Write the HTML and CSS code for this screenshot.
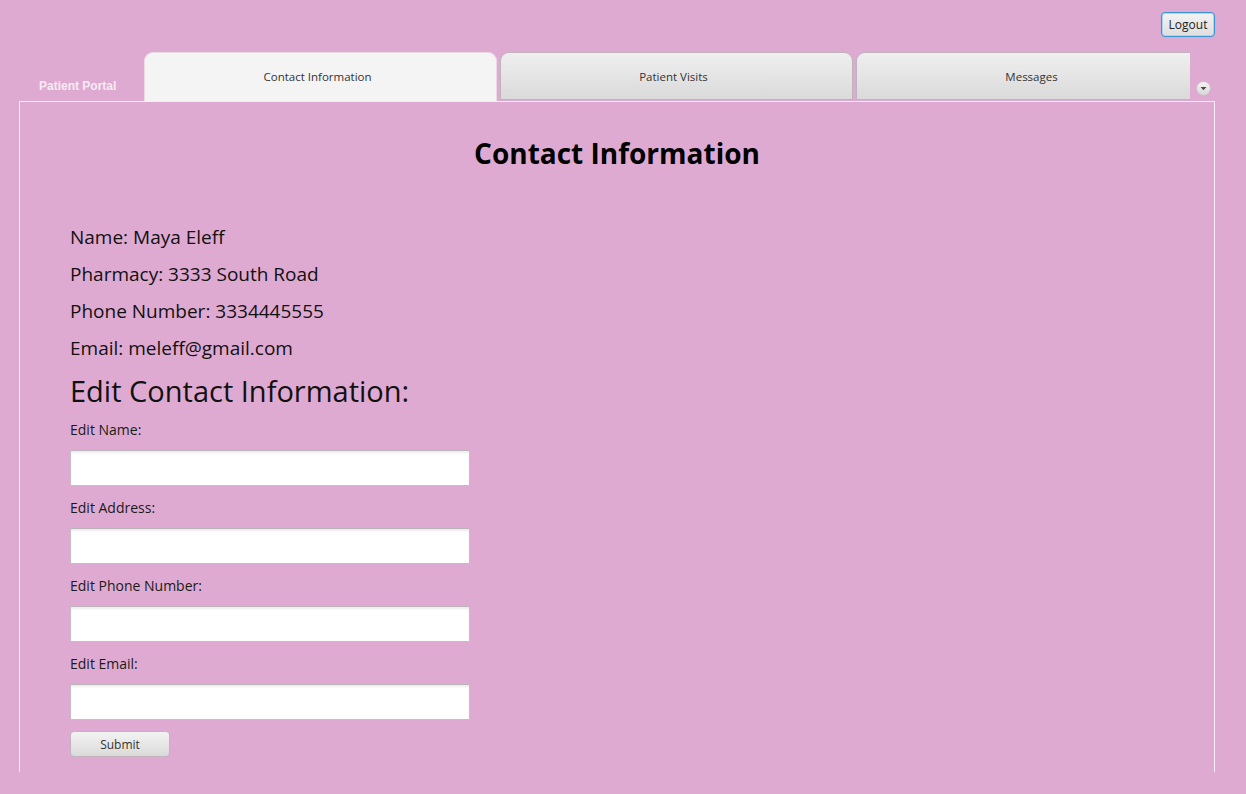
FILE: index.html
```html
<!DOCTYPE html>
<html lang="en">
<head>
<meta charset="utf-8">
<title>Patient Portal</title>
<link rel="stylesheet" href="styles.css">
</head>
<body>
<div class="app">
  <div class="topbar">
    <button class="logout">Logout</button>
  </div>
  <div class="tabrow">
    <div class="portal">Patient Portal</div>
    <div class="tabs">
      <div class="tab active">Contact Information</div>
      <div class="tab">Patient Visits</div>
      <div class="tab last">Messages</div>
    </div>
    <div class="overflow">
      <svg width="15" height="15" viewBox="0 0 15 15"><defs><linearGradient id="g" x1="0" y1="0" x2="0" y2="1"><stop offset="0" stop-color="#f6f6f6"/><stop offset="1" stop-color="#d6d6d6"/></linearGradient></defs><circle cx="7.5" cy="7.5" r="7" fill="url(#g)" stroke="#c9b8c4" stroke-width="0.8"/><path d="M4.6 6 L10.4 6 L7.5 9.2 Z" fill="#4a4a4a"/></svg>
    </div>
  </div>
  <div class="pane">
    <h1 class="title">Contact Information</h1>
    <div class="info">
      <p>Name: Maya Eleff</p>
      <p>Pharmacy: 3333 South Road</p>
      <p>Phone Number: 3334445555</p>
      <p>Email: meleff@gmail.com</p>
    </div>
    <h2 class="edit-title">Edit Contact Information:</h2>
    <form class="form">
      <label class="lbl">Edit Name:</label>
      <input class="field" type="text">
      <label class="lbl">Edit Address:</label>
      <input class="field" type="text">
      <label class="lbl">Edit Phone Number:</label>
      <input class="field" type="text">
      <label class="lbl">Edit Email:</label>
      <input class="field" type="text">
      <button type="button" class="submit">Submit</button>
    </form>
  </div>
</div>
</body>
</html>
```
FILE: styles.css
```css
* { box-sizing: border-box; }
html, body { margin: 0; padding: 0; }
body {
  background: #dfaad2;
  font-family: "Open Sans", "Noto Sans", sans-serif;
  color: #111;
  width: 1246px;
  height: 794px;
  overflow: hidden;
}
.app { display: flex; flex-direction: column; height: 794px; }
.topbar {
  display: flex;
  justify-content: flex-end;
  padding: 12px 31px 0 0;
  height: 52px;
}
.logout {
  width: 54px;
  height: 25px;
  padding: 0;
  font-family: "Open Sans", sans-serif;
  font-size: 12px;
  color: #222;
  background: linear-gradient(#f3f3f3, #dedede);
  border: 1px solid #3b97d3;
  border-radius: 4px;
  box-shadow: inset 0 0 0 1px #a9d6f0, 0 0 1px #6fb6e3;
}
.tabrow {
  display: flex;
  align-items: flex-end;
  height: 49px;
}
.portal {
  width: 144px;
  padding-left: 39px;
  padding-bottom: 8px;
  font-family: "Liberation Sans", Arial, sans-serif;
  font-weight: bold;
  font-size: 12px;
  color: #f6eaf2;
}
.tabs { display: flex; gap: 3px; height: 49px; }
.tab {
  width: 353px;
  height: 48px;
  display: flex;
  justify-content: center;
  padding: 16px 6px 0 0;
  font-size: 11.5px;
  color: #333;
  background: linear-gradient(#efefef, #dadada);
  border: 1px solid #bfb4bc;
  border-bottom: 1px solid #b5b9bd;
  border-radius: 9px 9px 0 0;
}
.tab.active {
  height: 49px;
  background: #f4f4f4;
  border-color: #e8dce4;
  border-bottom: none;
}
.tab.last {
  width: 334px;
  padding-left: 22px;
  border-top-right-radius: 0;
  border-right: none;
}
.overflow {
  width: 22px;
  padding: 0 0 5px 6px;
  height: 49px;
  display: flex;
  align-items: flex-end;
}
.overflow svg { display: block; }
.pane {
  margin-left: 19px;
  width: 1196px;
  height: 671px;
  border: 1px solid #f6eef4;
  border-bottom: none;
  padding: 0 0 0 50px;
}
.title {
  margin: 31px 0 0 -50px;
  text-align: center;
  font-size: 28px;
  font-weight: bold;
  line-height: 40px;
  color: #000;
}
.info { margin-top: 46px; }
.info p {
  margin: 0;
  font-size: 19px;
  line-height: 37px;
  color: #111;
}
.edit-title {
  margin: 0 0 5px;
  font-size: 29px;
  font-weight: normal;
  line-height: 48px;
  color: #111;
}
.form { display: flex; flex-direction: column; align-items: flex-start; }
.lbl {
  font-size: 14px;
  line-height: 20px;
  color: #1a1a1a;
}
.field {
  width: 400px;
  height: 36px;
  margin: 10px 0 12px;
  background: #fff;
  border: 1px solid #c9bcc6;
  border-top-color: #bdb3ba;
  box-shadow: inset 0 2px 2px #ececec;
}
.submit {
  width: 100px;
  height: 26px;
  margin-top: -1px;
  font-family: "Open Sans", sans-serif;
  font-size: 12px;
  color: #333;
  background: linear-gradient(#f3f3f3, #dadada);
  border: 1px solid #c2b4be;
  border-radius: 4px;
}
```
